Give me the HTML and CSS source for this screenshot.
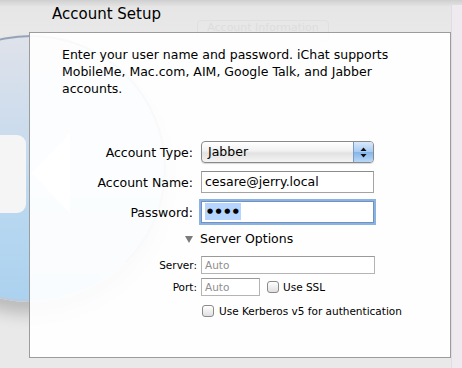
FILE: index.html
```html
<!DOCTYPE html>
<html lang="en">
<head>
  <meta charset="UTF-8" />
  <title>Account Setup</title>
  <link rel="stylesheet" href="styles.css">
</head>
<body>

  <div class="backdrop">
    <div class="globe">
      <div class="globe-card"></div>
      <div class="globe-arrow"></div>
    </div>
    <div class="ghost-tab">Account Information</div>
    <div class="edge"></div>
  </div>

  <h1 class="title">Account Setup</h1>

  <div class="sheet">
    <p class="intro">Enter your user name and password. iChat supports<br>MobileMe, Mac.com, AIM, Google Talk, and Jabber<br>accounts.</p>

    <div class="form">
      <label>Account Type:</label>
      <div class="popup">
        <span class="popup-value">Jabber</span>
        <span class="stepper">
          <svg width="7" height="11" viewBox="0 0 7 11"><path d="M3.5 0.5 L6.5 4 L0.5 4 Z M0.5 7 L6.5 7 L3.5 10.5 Z" fill="#111"/></svg>
        </span>
      </div>

      <label>Account Name:</label>
      <div class="field">cesare@jerry.local</div>

      <label>Password:</label>
      <div class="field focused"><span class="selected">●●●●</span></div>
    </div>

    <div class="disclosure"><span class="triangle"></span>Server Options</div>

    <div class="options">
      <label>Server:</label>
      <div class="small-field wide">Auto</div>

      <label>Port:</label>
      <div class="port-row">
        <div class="small-field narrow">Auto</div>
        <span class="check"></span>
        <span>Use SSL</span>
      </div>

      <span></span>
      <div class="kerberos">
        <span class="check"></span>
        <span>Use Kerberos v5 for authentication</span>
      </div>
    </div>
  </div>

</body>
</html>
```

FILE: styles.css
```css
body {
  margin: 0;
  width: 462px;
  height: 368px;
  overflow: hidden;
  position: relative;
  background: linear-gradient(to bottom, #cfcfcf 0, #e6e6e6 7px, #e9e9e9 40px);
  font-family: "DejaVu Sans", "Liberation Sans", sans-serif;
  color: #000;
}

/* things behind the sheet */
.backdrop {
  position: absolute;
  inset: 0;
  z-index: 0;
}

.globe {
  position: absolute;
  left: -104px;
  top: 35px;
  width: 266px;
  height: 263px;
  border-radius: 50%;
  border: 2px solid #94a4b8;
  border-bottom-color: #b9cbdc;
  background: linear-gradient(to bottom, #dfe2ea 0%, #ccdced 35%, #b7d7f0 70%, #acd2ef 100%);
  box-shadow: 0 12px 16px rgba(0, 0, 0, 0.2);
  overflow: hidden;
}

.globe-card {
  position: absolute;
  left: 78px;
  top: 98px;
  width: 50px;
  height: 78px;
  border-radius: 9px;
  background: #f5f5f5;
}

.globe-arrow {
  position: absolute;
  left: 134px;
  top: 96px;
  width: 0;
  height: 0;
  border-top: 40px solid transparent;
  border-bottom: 40px solid transparent;
  border-right: 38px solid #ffffff;
}

.ghost-tab {
  position: absolute;
  left: 197px;
  top: 20px;
  width: 130px;
  height: 20px;
  border: 1px solid #e0e0e0;
  border-radius: 4px;
  font-size: 11px;
  line-height: 14px;
  text-align: center;
  color: #dddddd;
}

.edge {
  position: absolute;
  left: 451px;
  top: 5px;
  width: 11px;
  bottom: 0;
  background: #eeeaef;
  border-left: 1px solid #e0dde2;
}

.title {
  position: relative;
  z-index: 1;
  margin: 0;
  padding: 5px 0 0 52px;
  height: 19px;
  font-size: 15px;
  font-weight: normal;
  line-height: 19px;
}

.sheet {
  position: relative;
  z-index: 1;
  margin: 8px 0 0 29px;
  width: 420px;
  height: 324px;
  border: 1px solid #9c9c9c;
  background: rgba(255, 255, 255, 0.93);
}

.intro {
  margin: 0;
  padding: 13px 0 0 32px;
  font-size: 12.5px;
  line-height: 17px;
  white-space: nowrap;
}

.form {
  display: grid;
  grid-template-columns: 163px 173px;
  column-gap: 8px;
  row-gap: 8px;
  margin-top: 44px;
  font-size: 12.5px;
}

.form label,
.options label {
  text-align: right;
  align-self: center;
}

.popup {
  height: 20px;
  border: 1px solid #8a8a8a;
  border-radius: 4px;
  display: flex;
  overflow: hidden;
  background: linear-gradient(to bottom, #ffffff 0%, #f1f1f1 45%, #e2e2e2 55%, #f4f4f4 100%);
  box-shadow: 0 1px 1px rgba(0, 0, 0, 0.15);
}

.popup-value {
  flex: 1;
  padding-left: 6px;
  line-height: 20px;
}

.stepper {
  width: 19px;
  display: flex;
  align-items: center;
  justify-content: center;
  border-left: 1px solid #7d9cc4;
  background: linear-gradient(to bottom, #d9e9fb 0%, #a9cbf2 48%, #86b5ea 52%, #b9d8f7 100%);
}

.field {
  height: 20px;
  border: 1px solid #a4a4a4;
  border-top-color: #8c8c8c;
  background: #fff;
  padding-left: 3px;
  line-height: 20px;
}

.field.focused {
  border-color: #7192c0;
  box-shadow: 0 0 0 2px #8ab3e3;
}

.selected {
  display: inline-block;
  background: #b5d5ff;
  font-size: 7px;
  letter-spacing: 2.5px;
  line-height: 17px;
  padding: 0 0 0 2px;
  vertical-align: top;
  margin-top: 1px;
}

.disclosure {
  margin: 8px 0 0 155px;
  font-size: 12.5px;
  line-height: 16px;
  display: flex;
  align-items: center;
}

.triangle {
  width: 0;
  height: 0;
  border-left: 4.5px solid transparent;
  border-right: 4.5px solid transparent;
  border-top: 7px solid #7b7b7b;
  margin-right: 7px;
}

.options {
  display: grid;
  grid-template-columns: 167px auto;
  column-gap: 4px;
  row-gap: 4px;
  margin-top: 9px;
  font-size: 10.5px;
}

.small-field {
  height: 16px;
  border: 1px solid #b4b4b4;
  border-top-color: #9a9a9a;
  background: #fff;
  color: #8e8e8e;
  padding-left: 3px;
  line-height: 16px;
}

.small-field.wide {
  width: 169px;
}

.small-field.narrow {
  width: 54px;
}

.port-row,
.kerberos {
  display: flex;
  align-items: center;
}

.port-row .check {
  margin: 0 4px 0 7px;
}

.kerberos {
  margin-top: 5px;
}

.kerberos .check {
  margin: 0 5px 0 1px;
}

.check {
  width: 10px;
  height: 10px;
  border: 1px solid #8a8a8a;
  border-radius: 3px;
  background: linear-gradient(to bottom, #ffffff, #e0e0e0);
}
```
